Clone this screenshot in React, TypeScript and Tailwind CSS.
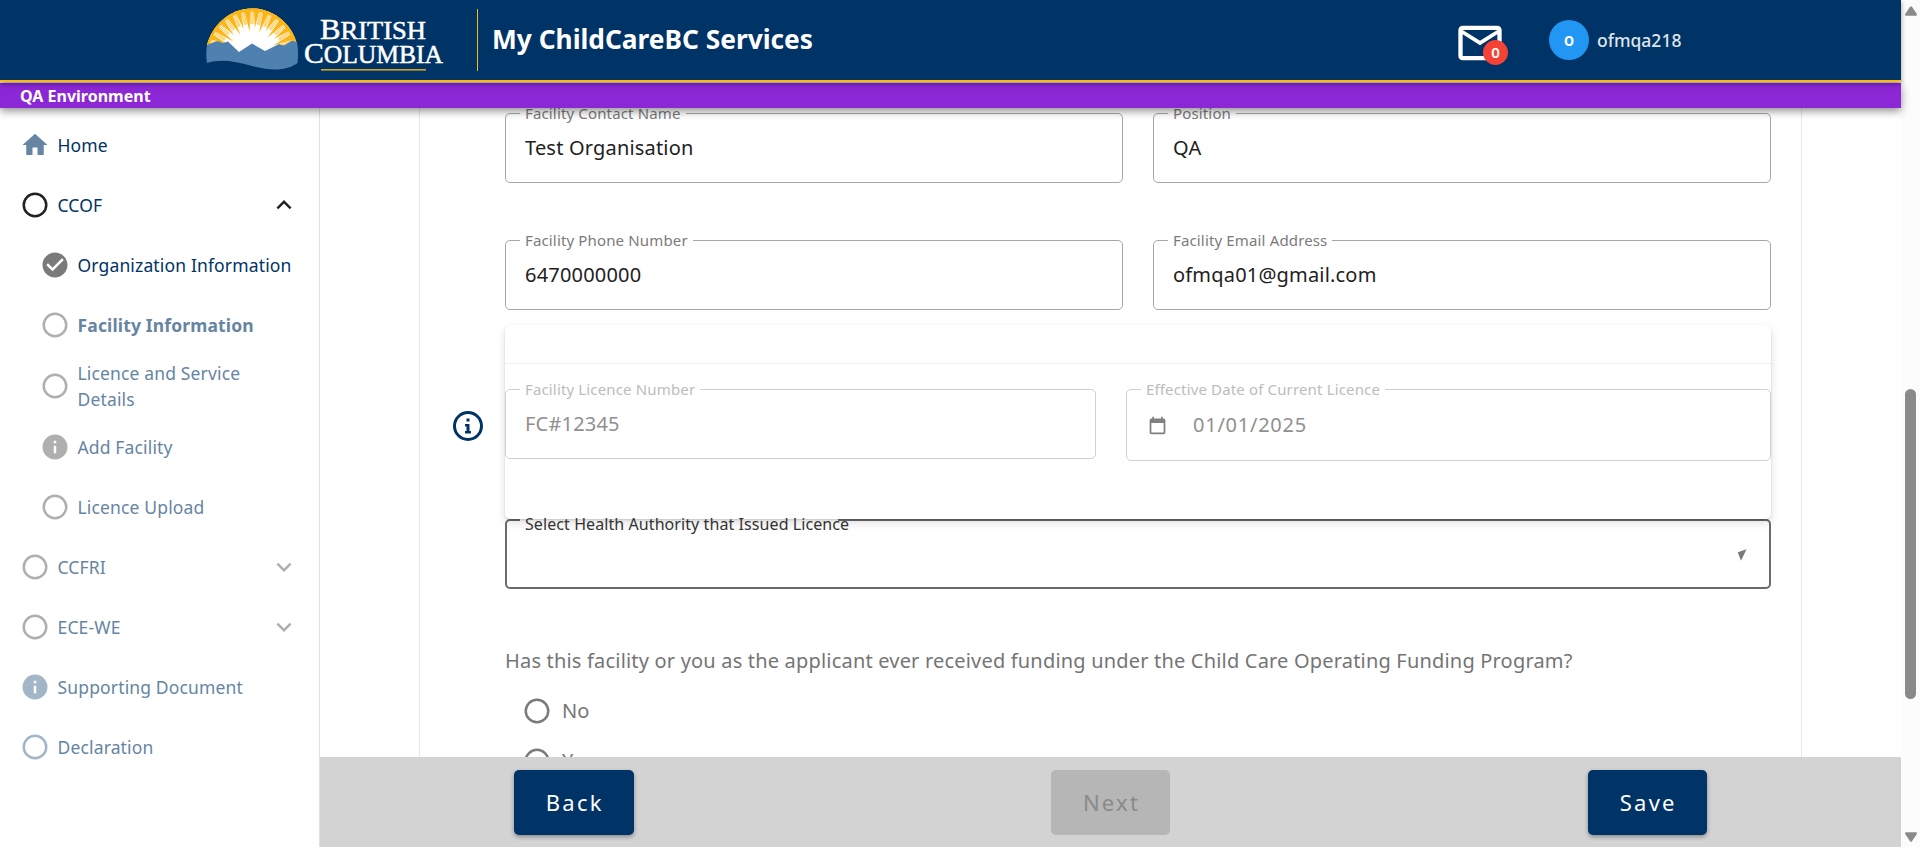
import React from "react";

type IconKind = "home" | "circle" | "check" | "info";

const PATHS: Record<IconKind, string> = {
  home: "M10,20V14H14V20H19V12H22L12,3L2,12H5V20H10Z",
  circle:
    "M12,20A8,8 0 0,1 4,12A8,8 0 0,1 12,4A8,8 0 0,1 20,12A8,8 0 0,1 12,20M12,2A10,10 0 0,0 2,12A10,10 0 0,0 12,22A10,10 0 0,0 22,12A10,10 0 0,0 12,2Z",
  check:
    "M12 2C6.5 2 2 6.5 2 12S6.5 22 12 22 22 17.5 22 12 17.5 2 12 2M10 17L5 12L6.41 10.59L10 14.17L17.59 6.58L19 8L10 17Z",
  info: "M13,9H11V7H13M13,17H11V11H13M12,2A10,10 0 0,0 2,12A10,10 0 0,0 12,22A10,10 0 0,0 22,12A10,10 0 0,0 12,2Z",
};

function Icon({ kind, className }: { kind: IconKind; className: string }) {
  return (
    <svg viewBox="0 0 24 24" className={`size-[30px] shrink-0 fill-current ${className}`}>
      <path d={PATHS[kind]} />
    </svg>
  );
}

function Chevron({ up, className }: { up?: boolean; className: string }) {
  return (
    <svg viewBox="0 0 24 24" className={`ml-auto size-[30px] fill-current ${className}`}>
      <path
        d={
          up
            ? "M7.41,15.41L12,10.83L16.59,15.41L18,14L12,8L6,14L7.41,15.41Z"
            : "M7.41,8.58L12,13.17L16.59,8.58L18,10L12,16L6,10L7.41,8.58Z"
        }
      />
    </svg>
  );
}

type NavItem = {
  label: string;
  icon: IconKind;
  iconClass: string;
  textClass: string;
  nested?: boolean;
  tall?: boolean;
  chevron?: "up" | "down";
};

const NAV: NavItem[] = [
  { label: "Home", icon: "home", iconClass: "text-[#6685a3]", textClass: "text-[#003366]" },
  { label: "CCOF", icon: "circle", iconClass: "text-[#212121]", textClass: "text-[#003366]", chevron: "up" },
  { label: "Organization Information", icon: "check", iconClass: "text-[#7a7a7a]", textClass: "text-[#003366]", nested: true },
  { label: "Facility Information", icon: "circle", iconClass: "text-[#afafaf]", textClass: "text-[#6685a3] font-bold", nested: true },
  { label: "Licence and Service Details", icon: "circle", iconClass: "text-[#afafaf]", textClass: "text-[#6685a3]", nested: true, tall: true },
  { label: "Add Facility", icon: "info", iconClass: "text-[#afafaf]", textClass: "text-[#6685a3]", nested: true },
  { label: "Licence Upload", icon: "circle", iconClass: "text-[#afafaf]", textClass: "text-[#6685a3]", nested: true },
  { label: "CCFRI", icon: "circle", iconClass: "text-[#afafaf]", textClass: "text-[#6685a3]", chevron: "down" },
  { label: "ECE-WE", icon: "circle", iconClass: "text-[#afafaf]", textClass: "text-[#6685a3]", chevron: "down" },
  { label: "Supporting Document", icon: "info", iconClass: "text-[#a3b6c8]", textClass: "text-[#6685a3]" },
  { label: "Declaration", icon: "circle", iconClass: "text-[#a3b6c8]", textClass: "text-[#6685a3]" },
];

const STEP = Math.PI / 15;

function polar(r: number, a: number) {
  return `${(46 + r * Math.cos(a)).toFixed(1)},${(47 + r * Math.sin(a)).toFixed(1)}`;
}

const RAYS = Array.from({ length: 16 }, (_, i) => {
  const a = Math.PI + i * STEP;
  const inner = i % 2 ? 23 : 27;
  return {
    spike: `${polar(inner, a)} ${polar(50, a - 0.07)} ${polar(50, a + 0.07)}`,
    fine: [0.34, 0.5, 0.66].map((f) => `${polar(31, a + f * STEP)} ${polar(50, a + f * STEP)}`),
  };
});

function Logo() {
  return (
    <svg viewBox="0 0 240 64" className="h-16 w-60">
      <defs>
        <clipPath id="dome">
          <path d="M1,37 C6,18 23,0.5 46,0.5 C69,0.5 87,18 91,37 L91,46 L1,46Z" />
        </clipPath>
      </defs>
      <g clipPath="url(#dome)">
        <rect width="92" height="50" fill="#fff" />
        {RAYS.map((r, i) => (
          <g key={i}>
            <polygon points={r.spike} fill="#fcb514" />
            {r.fine.map((p) => (
              <polyline key={p} points={p} stroke="#fcb514" strokeWidth="0.7" />
            ))}
          </g>
        ))}
        <circle cx="46" cy="47" r="46" fill="none" stroke="#fcb514" strokeWidth="5" />
      </g>
      <path
        d="M1,37 L7,34.5 L12,33 L17,35 L22,33.5 L33,44 L46,35.5 L52,39 L59,43 L73,36 L78,37.5 L86,32.5 L91,34.5 C92.500,42 92,49 91.500,55 C82,62 68,64 46,58 C28,53 14,51 1,55 C0,49 0,43 1,37Z"
        fill="#4f81b0"
      />
      <g fill="#fff" stroke="#fff" strokeWidth="0.5" fontFamily="'Liberation Serif', serif">
        <text x="114" y="31" fontSize="29" textLength="106" lengthAdjust="spacingAndGlyphs">
          B<tspan fontSize="25">RITISH</tspan>
        </text>
        <text x="98" y="55" fontSize="29" textLength="139" lengthAdjust="spacingAndGlyphs">
          C<tspan fontSize="25">OLUMBIA</tspan>
        </text>
      </g>
      <rect x="115" y="61" width="105" height="1.600" fill="#d9a520" />
    </svg>
  );
}

function Field({
  label,
  className,
  disabled,
  children,
}: {
  label: string;
  className: string;
  disabled?: boolean;
  children: React.ReactNode;
}) {
  return (
    <div
      className={`relative flex items-center rounded-[5px] border px-[19px] text-[20px] tracking-[0.009375em] ${
        disabled ? "border-[#d0d0d0] text-[#909090]" : "border-[#a6a6a6] text-[#212121]"
      } ${className}`}
    >
      <span
        className={`absolute -top-[12px] left-[14px] bg-white px-[5px] text-[15px] leading-[22px] tracking-[0.15px] whitespace-nowrap ${
          disabled ? "text-[#bcbcbc]" : "text-[#7b7b7b]"
        }`}
      >
        {label}
      </span>
      {children}
    </div>
  );
}

function Radio({ label }: { label: string }) {
  return (
    <div className="flex h-[50px] items-center gap-[10px] pl-[17px] text-[20px] text-[#757575]">
      <Icon kind="circle" className="text-[#7a7a7a]" />
      <span>{label}</span>
    </div>
  );
}

export default function App() {
  return (
    <div className="flex h-[847px] w-[1920px] overflow-hidden bg-white font-['Noto_Sans',sans-serif]">
      <div className="flex w-[1901px] flex-col">
        <header className="relative z-20 flex h-[82px] shrink-0 items-center border-b-2 border-[#fcba19] bg-[#003366] pl-[206px] shadow-[0_2px_5px_rgba(0,0,0,0.4)]">
          <Logo />
          <div className="ml-[31px] h-[62px] w-px bg-[#fcba19]" />
          <h1 className="ml-[14px] w-[962px] text-[26.300px] font-bold text-white">My ChildCareBC Services</h1>
          <div className="relative">
            <svg viewBox="0 0 24 24" className="mt-[6px] size-[52px] fill-white">
              <path d="M22 6C22 4.900 21.100 4 20 4H4C2.900 4 2 4.900 2 6V18C2 19.100 2.900 20 4 20H20C21.100 20 22 19.100 22 18V6M20 6L12 11L4 6H20M20 18H4V8L12 13L20 8V18Z" />
            </svg>
            <span className="absolute top-[29px] left-[29px] flex size-[25px] items-center justify-center rounded-full bg-[#f44336] text-[15px] font-semibold text-white">
              0
            </span>
          </div>
          <div className="ml-[43px] flex size-10 items-center justify-center rounded-full bg-[#2196f3] text-[17px] font-semibold text-white">
            o
          </div>
          <span className="ml-2 text-[17.500px] font-medium text-[#dfe5eb]">ofmqa218</span>
        </header>

        <div className="relative z-10 mt-px flex h-[25px] shrink-0 items-center bg-[#8c27d5] pl-5 text-[16px] leading-none font-bold text-white shadow-[0_3px_9px_rgba(0,0,0,0.45)]">
          QA Environment
        </div>

        <div className="flex min-h-0 flex-1">
          <nav className="flex w-80 shrink-0 flex-col border-r border-[#e0e0e0] pt-[7px]">
            {NAV.map((n) => (
              <div
                key={n.label}
                className={`flex items-center gap-[7.500px] pr-5 text-[17.500px] leading-[26px] tracking-[0.15px] ${n.textClass} ${
                  n.nested ? "pl-10" : "pl-5"
                } ${n.tall ? "h-[62px]" : "h-[60px]"}`}
              >
                <Icon kind={n.icon} className={n.iconClass} />
                <span className={n.tall ? "w-[200px]" : "whitespace-nowrap"}>{n.label}</span>
                {n.chevron && <Chevron up={n.chevron === "up"} className={n.chevron === "up" ? "text-[#212121]" : "text-[#afafaf]"} />}
              </div>
            ))}
          </nav>

          <div className="flex min-w-0 flex-1 flex-col">
            <main className="min-h-0 flex-1 overflow-hidden pr-[99px] pl-[99px]">
              <div className="h-[760px] border-x border-[#e8e8e8] pr-[30px] pl-[85px] pt-[5px]">
                <div className="grid grid-cols-2 gap-x-[30px] gap-y-[57px]">
                  <Field label="Facility Contact Name" className="h-[70px]">
                    Test Organisation
                  </Field>
                  <Field label="Position" className="h-[70px]">
                    QA
                  </Field>
                  <Field label="Facility Phone Number" className="h-[70px]">
                    6470000000
                  </Field>
                  <Field label="Facility Email Address" className="h-[70px]">
                    ofmqa01@gmail.com
                  </Field>
                </div>

                <section className="relative z-[1] mt-[15px] h-[194px] rounded-[5px] bg-white shadow-[0_1px_2px_rgba(0,0,0,0.15),0_4px_10px_rgba(0,0,0,0.12)]">
                  <div className="h-[39px] border-b border-[#eeeeee]" />
                  <svg viewBox="0 0 24 24" className="absolute top-[83px] -left-[55.500px] size-[36px] fill-[#003366]">
                    <path d={PATHS.circle} />
                    <path d="M11,7H13V9H11ZM10,10.700H13V15.300H14V17H10V15.300H11V12.400H10Z" />
                  </svg>
                  <div className="flex gap-[30px] pt-[25px]">
                    <Field label="Facility Licence Number" className="h-[70px] w-[591px]" disabled>
                      FC#12345
                    </Field>
                    <Field label="Effective Date of Current Licence" className="h-[72px] flex-1" disabled>
                      <svg viewBox="0 0 24 24" className="ml-px size-[21px] fill-[#808080]">
                        <path d="M19,4H18V2H16V4H8V2H6V4H5A2,2 0 0,0 3,6V20A2,2 0 0,0 5,22H19A2,2 0 0,0 21,20V6A2,2 0 0,0 19,4M19,20H5V9H19V20Z" />
                      </svg>
                      <span className="ml-[25px] tracking-[0.75px]">01/01/2025</span>
                    </Field>
                  </div>
                </section>

                <div className="relative flex h-[70px] items-center justify-end rounded-[5px] border-2 border-[#6b6b6b]">
                  <span className="absolute -top-[2px] left-[13px] h-[2px] w-[318px] bg-white" />
                  <span className="absolute -top-[8px] left-[18px] z-[2] text-[16px] leading-[22px] tracking-[0.08px] whitespace-nowrap text-[#333333]">
                    Select Health Authority that Issued Licence
                  </span>
                  <svg viewBox="0 0 10 12" className="mt-[2px] mr-[22px] h-3 w-[10px] fill-[#7a7a7a]">
                    <path d="M0.800,3.300L9.500,0.200L4,11.800Z" />
                  </svg>
                </div>

                <p className="mt-[57px] text-[20px] leading-[30px] tracking-[0.009375em] whitespace-nowrap text-[#757575]">
                  Has this facility or you as the applicant ever received funding under the Child Care Operating Funding Program?
                </p>
                <div className="mt-[10px]">
                  <Radio label="No" />
                  <Radio label="Yes" />
                </div>
              </div>
            </main>

            <footer className="relative z-[2] flex h-[90px] shrink-0 items-start justify-between bg-[#d3d3d3] pt-[13px] pr-[194px] pl-[194px]">
              <button className="h-[65px] w-[119.500px] rounded-[5px] bg-[#003366] pl-[2px] text-[22px] tracking-[2.200px] text-white shadow-[0_2px_4px_rgba(0,0,0,0.35)]">
                Back
              </button>
              <button className="h-[65px] w-[119.500px] rounded-[5px] bg-[#b6b6b6] pl-[2px] text-[22px] tracking-[2.200px] text-[#8a8a8a]">
                Next
              </button>
              <button className="h-[65px] w-[119.500px] rounded-[5px] bg-[#003366] pl-[2px] text-[22px] tracking-[2.200px] text-white shadow-[0_2px_4px_rgba(0,0,0,0.35)]">
                Save
              </button>
            </footer>
          </div>
        </div>
      </div>

      <div className="flex w-[19px] flex-col items-center bg-[#fcfcfc]">
        <svg viewBox="0 0 12 10" className="mt-[6px] h-[10px] w-3 fill-[#8a8a8a]">
          <path d="M5,0.800Q6,-0.300 7,0.800L11.800,8Q12.300,9.700 11,9.700H1Q-0.300,9.700 0.200,8Z" />
        </svg>
        <div className="mt-[373px] h-[310px] w-[11px] rounded-full bg-[#8a8a8a]" />
        <svg viewBox="0 0 12 10" className="mt-[133px] h-[10px] w-3 fill-[#8a8a8a]">
          <path d="M5,9.200Q6,10.300 7,9.200L11.800,2Q12.300,0.300 11,0.300H1Q-0.300,0.300 0.200,2Z" />
        </svg>
      </div>
    </div>
  );
}
